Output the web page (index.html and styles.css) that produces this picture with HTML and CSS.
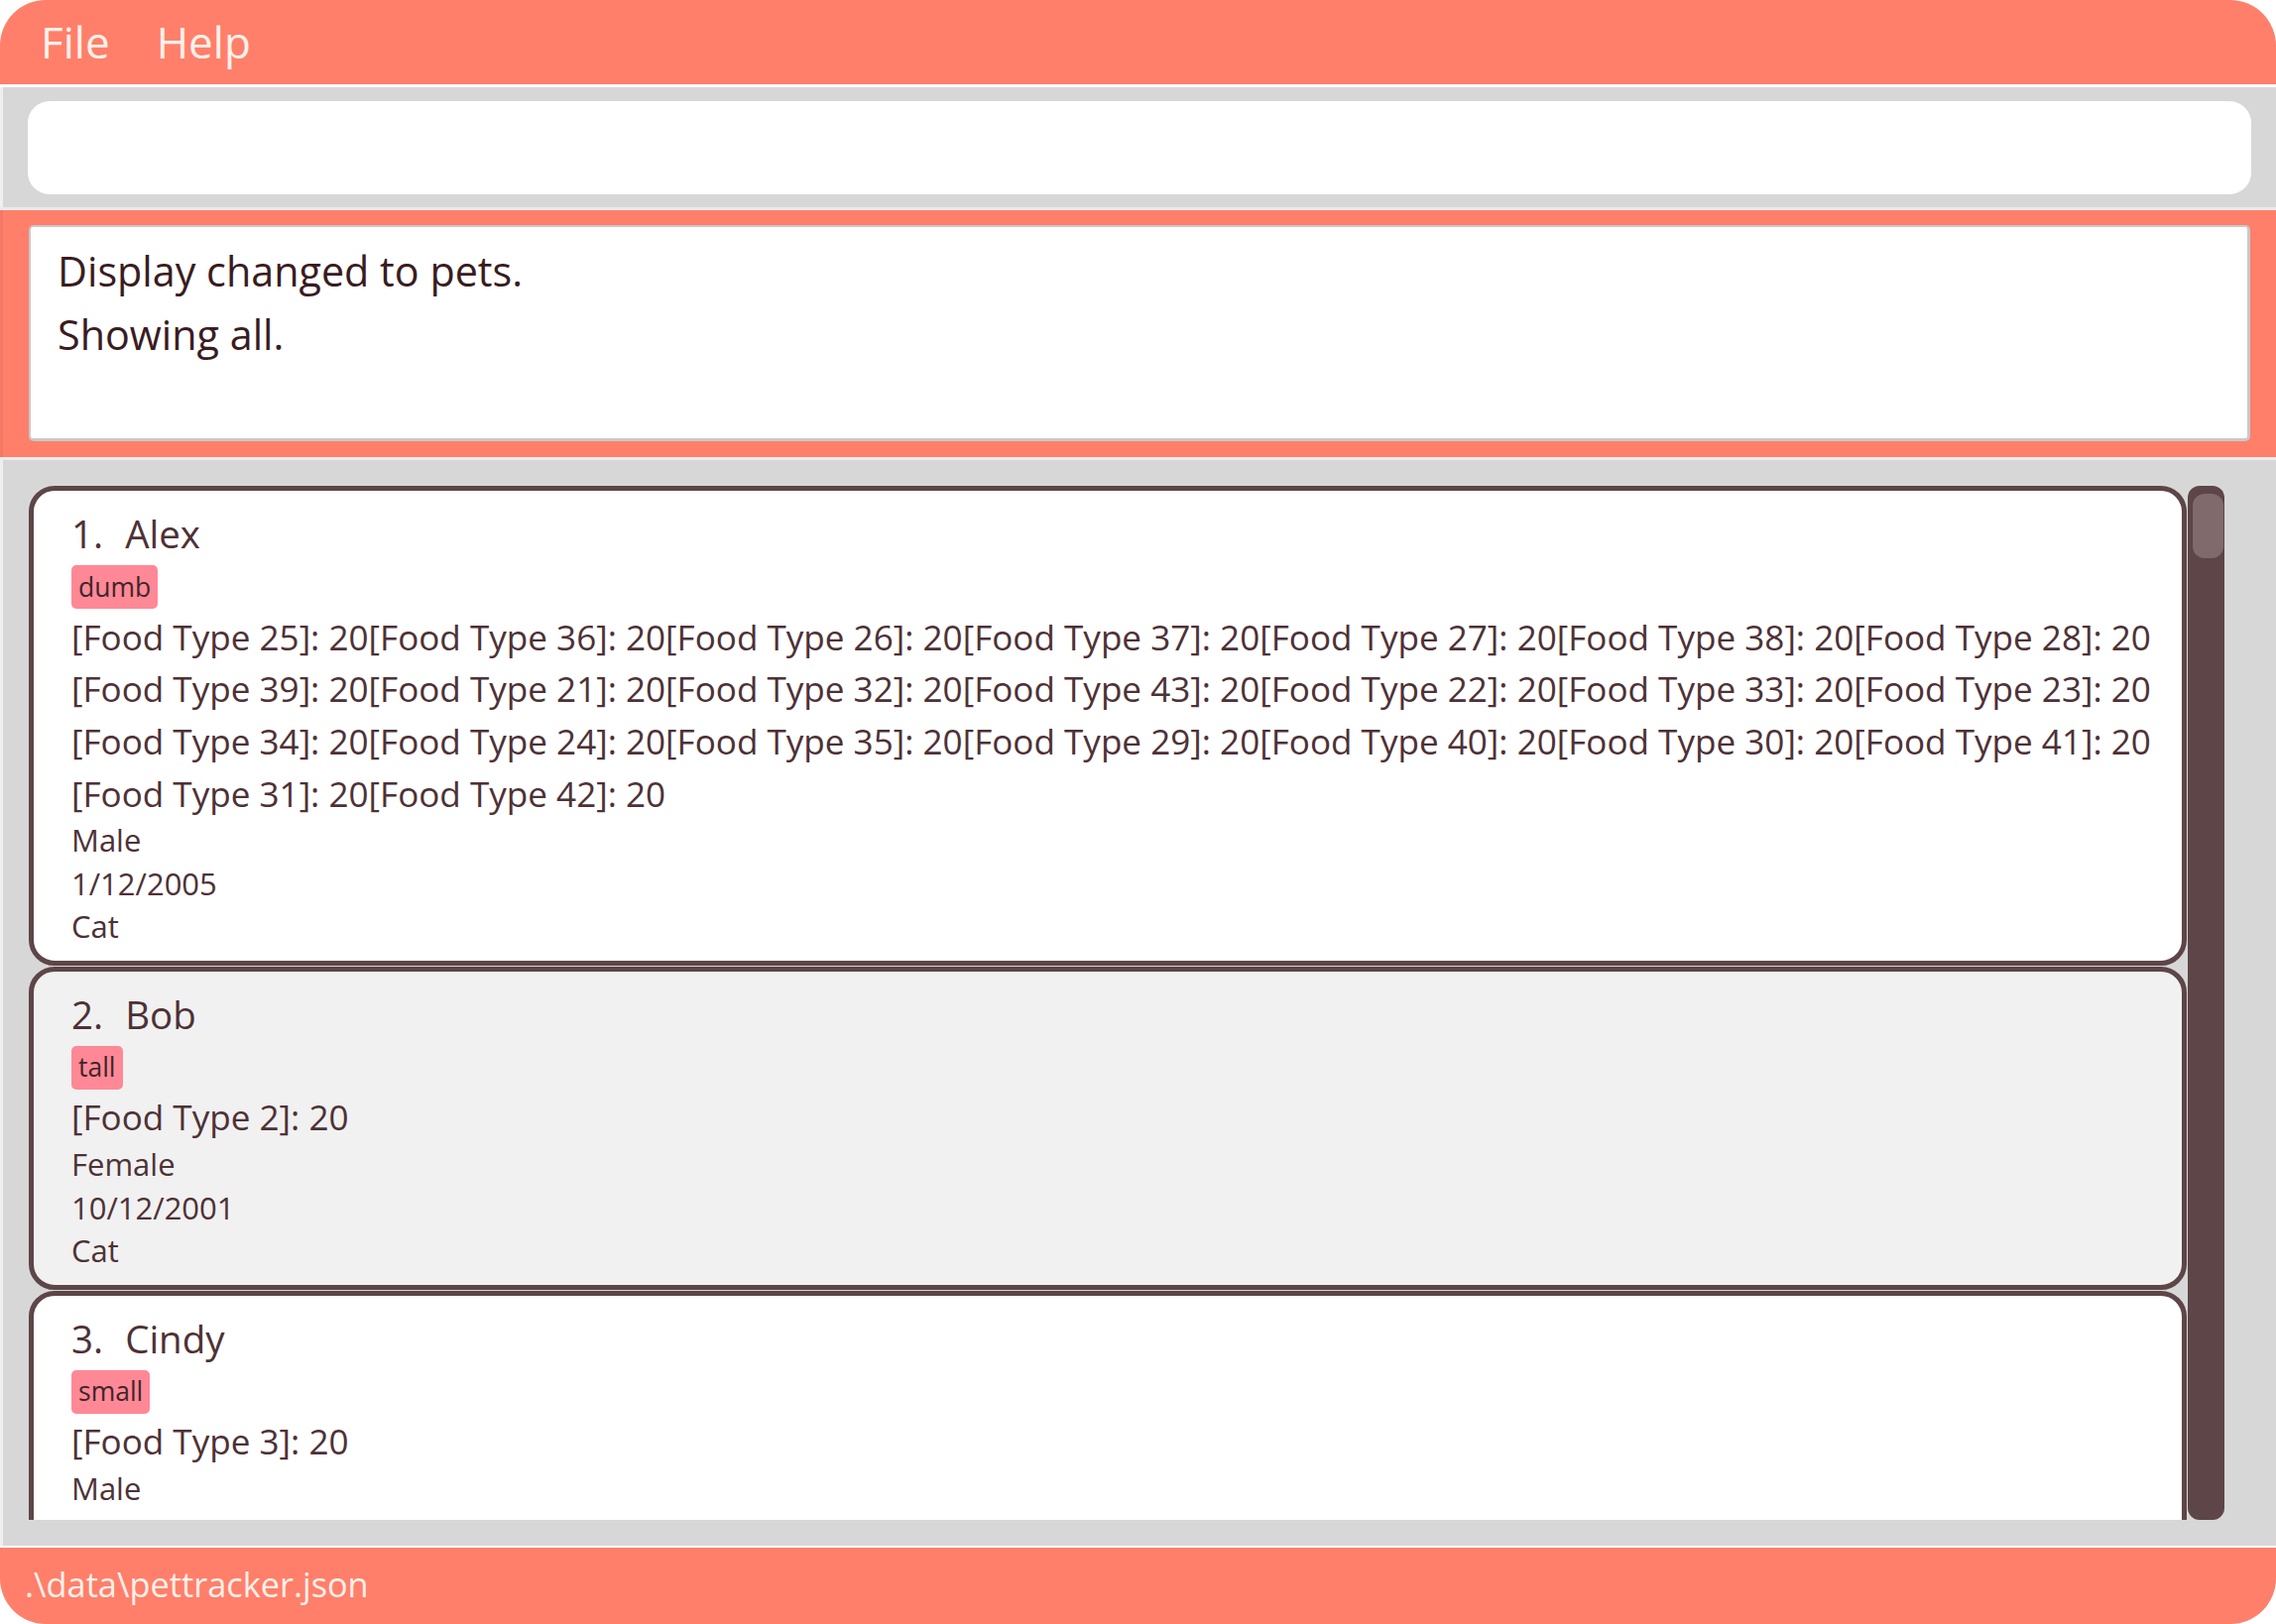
FILE: index.html
```html
<!DOCTYPE html>
<html lang="en">
<head>
<meta charset="utf-8">
<title>PetTracker</title>
<link rel="stylesheet" href="styles.css">
</head>
<body>
<div class="window">
  <div class="menubar">
    <span class="menu-item">File</span>
    <span class="menu-item">Help</span>
  </div>
  <div class="sep sep-white"></div>
  <div class="command-panel">
    <div class="command-box"></div>
  </div>
  <div class="sep sep-light"></div>
  <div class="result-panel">
    <div class="result-box">
      <div class="result-line">Display changed to pets.</div>
      <div class="result-line">Showing all.</div>
    </div>
  </div>
  <div class="sep sep-light"></div>
  <div class="list-panel">
    <div class="cards">
      <div class="card">
        <div class="name"><span class="idx">1.</span><span>Alex</span></div>
        <div class="tags"><span class="tag">dumb</span></div>
        <div class="food">
          <div class="food-line">[Food Type 25]: 20[Food Type 36]: 20[Food Type 26]: 20[Food Type 37]: 20[Food Type 27]: 20[Food Type 38]: 20[Food Type 28]: 20</div>
          <div class="food-line">[Food Type 39]: 20[Food Type 21]: 20[Food Type 32]: 20[Food Type 43]: 20[Food Type 22]: 20[Food Type 33]: 20[Food Type 23]: 20</div>
          <div class="food-line">[Food Type 34]: 20[Food Type 24]: 20[Food Type 35]: 20[Food Type 29]: 20[Food Type 40]: 20[Food Type 30]: 20[Food Type 41]: 20</div>
          <div class="food-line">[Food Type 31]: 20[Food Type 42]: 20</div>
        </div>
        <div class="detail">Male</div>
        <div class="detail">1/12/2005</div>
        <div class="detail">Cat</div>
      </div>
      <div class="card card-alt">
        <div class="name"><span class="idx">2.</span><span>Bob</span></div>
        <div class="tags"><span class="tag">tall</span></div>
        <div class="food">
          <div class="food-line">[Food Type 2]: 20</div>
        </div>
        <div class="detail">Female</div>
        <div class="detail">10/12/2001</div>
        <div class="detail">Cat</div>
      </div>
      <div class="card">
        <div class="name"><span class="idx">3.</span><span>Cindy</span></div>
        <div class="tags"><span class="tag">small</span></div>
        <div class="food">
          <div class="food-line">[Food Type 3]: 20</div>
        </div>
        <div class="detail">Male</div>
        <div class="detail">2/10/2010</div>
        <div class="detail">Dog</div>
      </div>
    </div>
    <div class="scrollbar">
      <div class="thumb"></div>
    </div>
  </div>
  <div class="sep sep-white sep-thin"></div>
  <div class="statusbar">.\data\pettracker.json</div>
</div>
</body>
</html>
```
FILE: styles.css
```css
* {
  box-sizing: border-box;
}

html, body {
  margin: 0;
  padding: 0;
  background: #ffffff;
}

body {
  font-family: "Open Sans", "Noto Sans", sans-serif;
  width: 2295px;
  height: 1638px;
  overflow: hidden;
}

.window {
  width: 2295px;
  height: 1638px;
  display: flex;
  flex-direction: column;
  border-radius: 46px;
  overflow: hidden;
}

.menubar {
  height: 85px;
  flex: none;
  background: #ff7f6a;
  display: flex;
  align-items: center;
  gap: 47px;
  padding-left: 41px;
  padding-bottom: 2px;
}

.menu-item {
  color: #fff1ea;
  font-size: 44px;
  line-height: 1;
}

.sep {
  flex: none;
  height: 3px;
}

.sep-white {
  background: #ffffff;
}

.sep-light {
  background: #ececec;
}

.sep-thin {
  height: 2px;
}

.command-panel {
  flex: none;
  height: 121px;
  background: #d7d7d7;
  border-left: 3px solid #efefef;
  padding: 14px 25px 13px 25px;
}

.command-box {
  height: 94px;
  background: #ffffff;
  border-radius: 22px;
}

.result-panel {
  flex: none;
  height: 249px;
  background: #ff7f6a;
  border-left: 3px solid #f37865;
  padding: 15px 26px 16px 26px;
}

.result-box {
  height: 218px;
  background: #ffffff;
  border: 2px solid #c9c9c9;
  border-right-width: 3px;
  border-bottom-width: 3px;
  border-radius: 5px;
  padding: 12px 0 0 27px;
  color: #3a1c21;
}

.result-line {
  font-size: 41.3px;
  line-height: 64px;
}

.list-panel {
  flex: none;
  height: 1095px;
  background: #d7d7d7;
  border-left: 3px solid #efefef;
  padding: 26px 52px 26px 26px;
  display: flex;
}

.cards {
  flex: 1;
  min-width: 0;
  overflow: hidden;
  display: flex;
  flex-direction: column;
  gap: 1px;
}

.card {
  flex: none;
  background: #ffffff;
  border: 5px solid #5d4548;
  border-radius: 26px;
  padding: 17px 20px 12px 38px;
  color: #4e3136;
}

.card-alt {
  background: #f1f1f1;
}

.name {
  display: flex;
  gap: 22px;
  font-size: 38.5px;
  line-height: 53px;
}

.tags {
  display: flex;
  margin-top: 5px;
  margin-bottom: 1.5px;
}

.tag {
  height: 44px;
  display: flex;
  align-items: center;
  padding: 0 7px 1px 7px;
  background: #ff8896;
  border-radius: 5px;
  font-size: 26.5px;
  color: #3e2529;
}

.food-line {
  font-size: 35.1px;
  line-height: 52.7px;
  white-space: nowrap;
}

.detail {
  font-size: 31px;
  line-height: 43.5px;
}

.scrollbar {
  flex: none;
  width: 37px;
  margin-left: 1px;
  background: #5d4548;
  border-radius: 12px;
  padding: 8px 1px 0 5px;
}

.thumb {
  height: 65px;
  background: #806a6c;
  border-radius: 12px;
}

.statusbar {
  flex: none;
  height: 77px;
  background: #ff7f6a;
  color: #fff1ea;
  font-size: 34.3px;
  line-height: 1;
  padding-left: 25px;
  display: flex;
  align-items: center;
  padding-bottom: 2px;
}
```
